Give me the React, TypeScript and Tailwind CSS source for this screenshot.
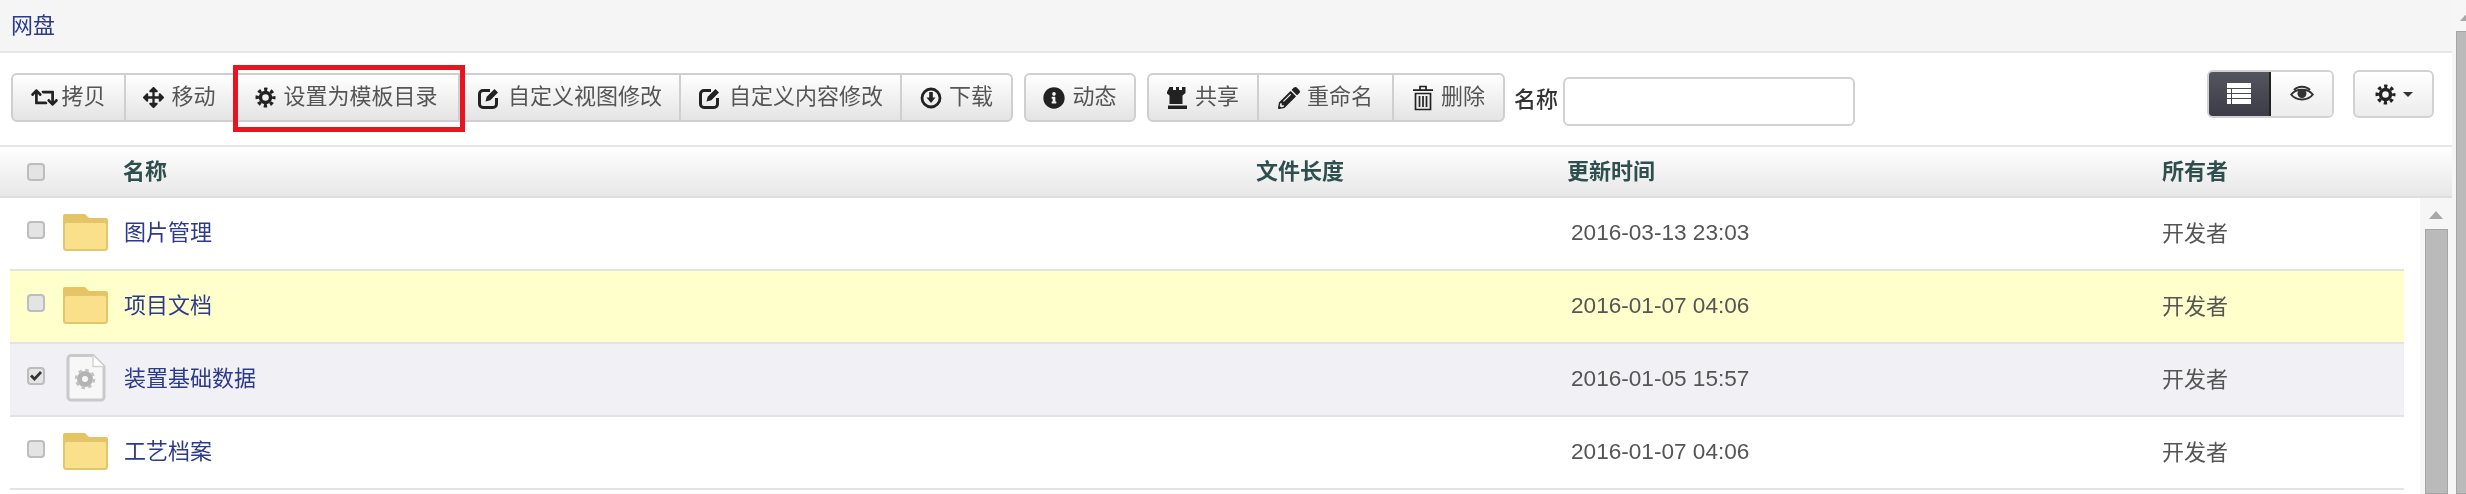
import type { ReactNode } from "react"
import { FaArrowsAlt, FaInfoCircle, FaPencilAlt, FaRetweet } from "react-icons/fa"

const GearIcon = () => (
  <svg width="21" height="21" viewBox="0 0 21 21" fill="none" stroke="currentColor">
    <circle cx="10.5" cy="10.5" r="5" strokeWidth="3.4" />
    <circle cx="10.5" cy="10.5" r="8.3" strokeWidth="3.4" strokeDasharray="3.3 3.22" strokeDashoffset="1.65" />
  </svg>
)

const EditIcon = () => (
  <svg width="24" height="24" viewBox="0 0 24 24" fill="none" stroke="currentColor">
    <path d="M13 4.500H6a3.500 3.500 0 0 0-3.500 3.500v10A3.500 3.500 0 0 0 6 21.500h10a3.500 3.500 0 0 0 3.500-3.500v-6" strokeWidth="3" />
    <path d="M8.500 15.500l1.200-4.800L17.500 3l3.500 3.500-7.700 7.800z" fill="currentColor" stroke="none" />
  </svg>
)

const DownloadIcon = () => (
  <svg width="22" height="22" viewBox="0 0 22 22" fill="none" stroke="currentColor">
    <circle cx="11" cy="11" r="9" strokeWidth="2.800" />
    <path d="M9.200 5h3.600v5.500h2.700L11 16l-4.500-5.500h2.700z" fill="currentColor" stroke="none" />
  </svg>
)

const TowerIcon = () => (
  <svg width="21" height="24" viewBox="0 0 21 24" fill="currentColor">
    <path d="M2.500 1h3.500v3h3V1h3v3h3V1h3.500v6l-3 2.500V18h-13V9.500l-3-2.500zM1 19.500h19V23H1z" />
  </svg>
)

const TrashIcon = () => (
  <svg width="22" height="26" viewBox="0 0 22 26" fill="none" stroke="currentColor" strokeWidth="1.700">
    <path d="M8 5V1.500h6V5M1 5.200h20M3.500 8.500h15V24.500h-15zM7.500 11v11M11 11v11M14.500 11v11" />
  </svg>
)

const ListIcon = () => (
  <svg width="24" height="22" viewBox="0 0 24 22" fill="#fff">
    <path d="M0 0h24v5H0zM0 6h4v4H0zM5 6h19v4H5zM0 11h4v4H0zM5 11h19v4H5zM0 16h4v5H0zM5 16h19v5H5z" />
  </svg>
)

const EyeIcon = () => (
  <svg width="24" height="18" viewBox="0 0 24 18" fill="none" stroke="#333">
    <path d="M1.200 9.500C6 3 18 3 22.800 9.500 18 16 6 16 1.200 9.500z" strokeWidth="2" />
    <path d="M4 5C8 .5 16 .5 20 5" strokeWidth="2" />
    <circle cx="12" cy="8.500" r="4.500" fill="#333" stroke="none" />
  </svg>
)

const FolderIcon = () => (
  <svg width="45" height="38" viewBox="0 0 45 38" className="-mt-[3px]">
    <path d="M0 3a2 2 0 0 1 2-2h20l4 4h17a2 2 0 0 1 2 2v4H0z" fill="#e6c464" />
    <rect x="1" y="9" width="43" height="28" rx="2.500" fill="#fbe08c" stroke="#e4c56f" strokeWidth="2" />
  </svg>
)

const FileIcon = () => (
  <svg width="40" height="48" viewBox="0 0 40 48" className="ml-[3px] -mt-[3px]">
    <path d="M5 1.500h22l11 11V43a3 3 0 0 1-3 3H5a3 3 0 0 1-3-3V4.500a3 3 0 0 1 3-3z" fill="#f7f7f7" stroke="#c9c9c9" strokeWidth="3" />
    <path d="M27 1.500V12.500H38" fill="#fff" stroke="#d5d5d5" strokeWidth="1.500" />
    <circle cx="19" cy="25" r="5.500" fill="none" stroke="#b3b3b3" strokeWidth="5" />
    <circle cx="19" cy="25" r="9" fill="none" stroke="#c2c2c2" strokeWidth="2.500" strokeDasharray="3.500 3.570" />
  </svg>
)

const Checkbox = ({ checked = false }: { checked?: boolean }) => (
  <span className="-mt-[7px] flex h-[18px] w-[18px] items-center justify-center rounded-[4px] border-2 border-[#bdbdbd] bg-[#e4e4e4]">
    {checked && (
      <svg width="14" height="12" viewBox="0 0 14 12">
        <path d="M1 6.500l2-2 2.500 2.500L11 1l2 2-7.500 8z" fill="#333" />
      </svg>
    )}
  </span>
)

const ScrollBar = () => (
  <div className="flex w-[32px] shrink-0 flex-col items-center bg-[#f6f6f6] pt-[13px]">
    <span className="border-x-[7px] border-b-[8px] border-x-transparent border-b-[#a8a8a8]" />
    <div className="mt-[10px] w-[23px] flex-1 border border-[#a5a5a5] bg-[#bababa]" />
  </div>
)

type Tool = { icon: ReactNode; label: string; width: string; highlight?: boolean }

const mainTools: Tool[] = [
  { icon: <FaRetweet className="-mr-[4px] text-[27px]" />, label: "拷贝", width: "w-[111px]" },
  { icon: <FaArrowsAlt className="text-[21px]" />, label: "移动", width: "w-[109px]" },
  { icon: <GearIcon />, label: "设置为模板目录", width: "w-[225px]", highlight: true },
  { icon: <EditIcon />, label: "自定义视图修改", width: "w-[221px]" },
  { icon: <EditIcon />, label: "自定义内容修改", width: "w-[221px]" },
  { icon: <DownloadIcon />, label: "下载", width: "w-[111px]" },
]

const fileTools: Tool[] = [
  { icon: <TowerIcon />, label: "共享", width: "w-[108px]" },
  { icon: <FaPencilAlt className="text-[22px]" />, label: "重命名", width: "w-[135px]" },
  { icon: <TrashIcon />, label: "删除", width: "w-[111px]" },
]

const ToolGroup = ({ tools }: { tools: Tool[] }) => (
  <div className="flex h-[49px] rounded-[6px] border-2 border-[#cfcfcf] bg-gradient-to-b from-white to-[#e4e4e4]">
    {tools.map((tool, idx) => (
      <div
        key={tool.label}
        className={`relative flex items-center justify-center gap-[7px] ${tool.width} ${idx > 0 ? "border-l-2 border-l-[#cfcfcf]" : ""}`}
      >
        <span className="flex text-[#222]">{tool.icon}</span>
        <span className="-mt-[2px]">{tool.label}</span>
        {tool.highlight && (
          <div className="absolute -top-[10px] -bottom-[12px] -left-[2px] -right-[7px] border-[5px] border-[#e8141f]" />
        )}
      </div>
    ))}
  </div>
)

const rows = [
  { name: "图片管理", time: "2016-03-13 23:03", bg: "bg-white", file: false, checked: false },
  { name: "项目文档", time: "2016-01-07 04:06", bg: "bg-[#ffffcc]", file: false, checked: false },
  { name: "装置基础数据", time: "2016-01-05 15:57", bg: "bg-[#f0f0f5]", file: true, checked: true },
  { name: "工艺档案", time: "2016-01-07 04:06", bg: "bg-white", file: false, checked: false },
]

const App = () => {
  return (
    <div className="flex h-[494px] w-[2466px] overflow-hidden bg-white font-[family-name:'Liberation_Sans','Noto_Sans_CJK_SC',sans-serif] text-[22px] text-[#555] blur-[0.4px]">
      <div className="flex w-[2452px] flex-col">
        <div className="flex h-[53px] items-center border-b-2 border-b-[#e6e6e6] bg-[#f5f5f5] pl-[11px] text-[#2b3a8c]">
          网盘
        </div>

        <div className="flex h-[92px] items-start pl-[11px] pr-[18px] pt-[17px]">
          <div className="mt-[3px] flex items-start">
            <ToolGroup tools={mainTools} />
            <div className="ml-[11px]">
              <ToolGroup tools={[{ icon: <FaInfoCircle className="text-[22px]" />, label: "动态", width: "w-[108px]" }]} />
            </div>
            <div className="ml-[11px]">
              <ToolGroup tools={fileTools} />
            </div>
            <label className="ml-[9px] mt-[10px] font-medium text-[#333]">名称</label>
            <input className="ml-[5px] mt-[4px] h-[49px] w-[292px] rounded-[6px] border-2 border-[#d2d2d2] bg-white" />
          </div>

          <div className="ml-auto flex items-start gap-[19px]">
            <div className="flex h-[48px] w-[127px] overflow-hidden rounded-[6px] border-2 border-[#d2d2d2]">
              <div className="-m-[2px] flex w-[64px] items-center justify-center rounded-l-[6px] border-2 border-[#222] bg-gradient-to-b from-[#55555f] to-[#3c3c48]">
                <ListIcon />
              </div>
              <div className="ml-[2px] flex flex-1 items-center justify-center bg-gradient-to-b from-white to-[#ececec]">
                <EyeIcon />
              </div>
            </div>
            <div className="flex h-[48px] w-[81px] items-center justify-center gap-[7px] rounded-[6px] border-2 border-[#d2d2d2] bg-gradient-to-b from-white to-[#ececec] text-[#222]">
              <GearIcon />
              <span className="mt-[1px] border-x-[5px] border-t-[5px] border-x-transparent border-t-[#333]" />
            </div>
          </div>
        </div>

        <div className="grid h-[53px] grid-cols-[123px_1133px_311px_595px_1fr] items-center border-y-2 border-t-[#e6e6e6] border-b-[#dedede] bg-gradient-to-b from-white to-[#e7e7e7] font-bold text-[#2f4f4f]">
          <div className="flex pl-[27px] pt-[7px]">
            <Checkbox />
          </div>
          <div>名称</div>
          <div>文件长度</div>
          <div>更新时间</div>
          <div>所有者</div>
        </div>

        <div className="flex flex-1 pl-[10px]">
          <div className="w-[2394px]">
            {rows.map((row) => (
              <div
                key={row.name}
                className={`grid h-[73px] grid-cols-[53px_62px_1446px_591px_1fr] items-center border-b-2 border-b-[#e3e3e3] ${row.bg}`}
              >
                <div className="flex pl-[17px]">
                  <Checkbox checked={row.checked} />
                </div>
                <div className="flex">{row.file ? <FileIcon /> : <FolderIcon />}</div>
                <div className="-mt-[2px] -ml-[1px] text-[#2b3a8c]">{row.name}</div>
                <div className="-mt-[1px] text-[22.6px]">{row.time}</div>
                <div className="-mt-[1px]">开发者</div>
              </div>
            ))}
          </div>
          <div className="ml-[16px] flex">
            <ScrollBar />
          </div>
        </div>
      </div>
      <div className="flex w-[14px] overflow-hidden bg-[#f6f6f6]">
        <div className="-ml-[1px] flex">
          <ScrollBar />
        </div>
      </div>
    </div>
  )
}

export default App
